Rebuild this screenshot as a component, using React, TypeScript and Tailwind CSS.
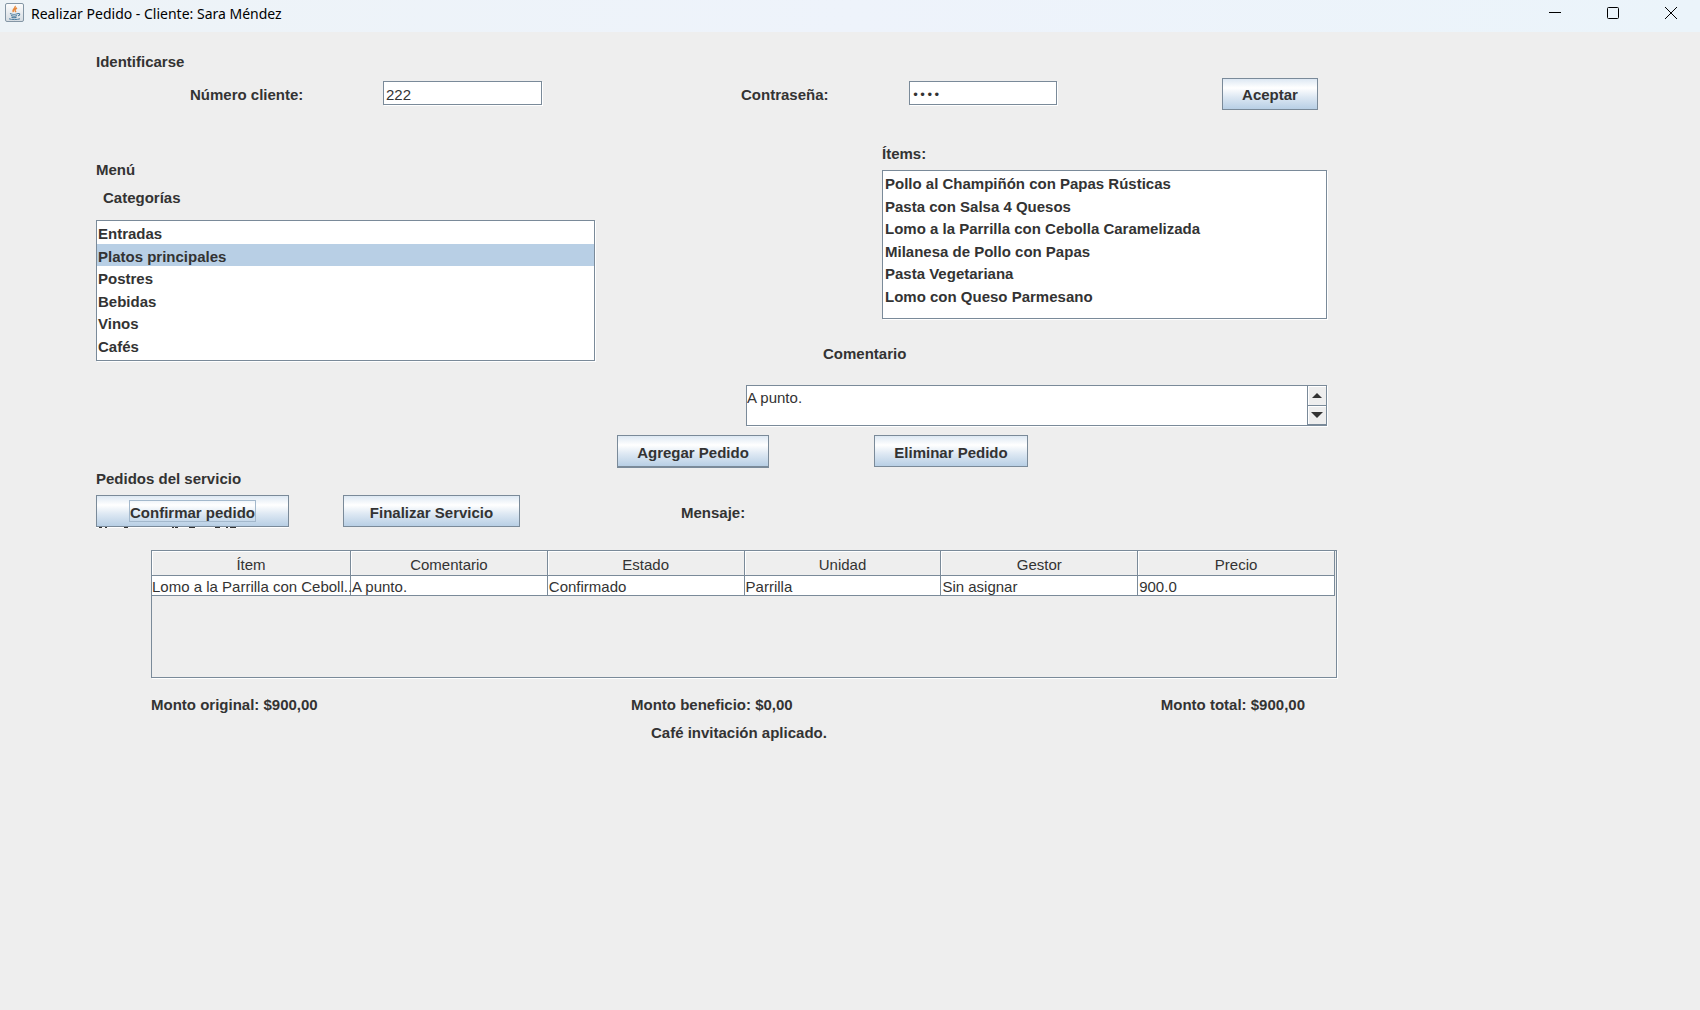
import { FunctionComponent, ReactNode, useState } from "react";

const categories = [
  "Entradas",
  "Platos principales",
  "Postres",
  "Bebidas",
  "Vinos",
  "Cafés",
];

const items = [
  "Pollo al Champiñón con Papas Rústicas",
  "Pasta con Salsa 4 Quesos",
  "Lomo a la Parrilla con Cebolla Caramelizada",
  "Milanesa de Pollo con Papas",
  "Pasta Vegetariana",
  "Lomo con Queso Parmesano",
];

const columns = ["Ítem", "Comentario", "Estado", "Unidad", "Gestor", "Precio"];

const orders = [
  [
    "Lomo a la Parrilla con Ceboll..",
    "A punto.",
    "Confirmado",
    "Parrilla",
    "Sin asignar",
    "900.0",
  ],
];

const JavaIcon: FunctionComponent = () => (
  <svg width="20" height="20" viewBox="0 0 20 20" fill="none" aria-hidden="true">
    <defs>
      <linearGradient id="java-bg" x1="0" y1="0" x2="0" y2="1">
        <stop offset="0" stopColor="#fdfdfd" />
        <stop offset="1" stopColor="#d5dce2" />
      </linearGradient>
    </defs>
    <rect x="0.5" y="0.5" width="18" height="18" rx="1.5" fill="url(#java-bg)" stroke="#8496a5" />
    <path d="M10 3c1.500 2-3.500 3-1.500 6M12 5c-2.500 1.200-2.500 2.200-1 4" stroke="#e8893c" strokeWidth="1.500" />
    <path d="M5 10.500c2 1 6 1 8 0M6 12.500c2 .8 4.500.8 6 0M6.500 14.300c1.500.6 3.500.6 5 0M13 10.500c2.500-.5 2 2 0 2.300" stroke="#4d7d9e" strokeWidth="1.100" />
    <path d="M4 15.800c3 1 8 1 11 0" stroke="#4d7d9e" />
  </svg>
);

const TitleBar: FunctionComponent = () => (
  <header className="flex h-8 items-start justify-between bg-linear-to-r from-[#edf3f7] via-[#eef3fb] to-[#ebf4fa] pl-[5px] text-black">
    <div className="flex items-start gap-1.5 pt-[3px]">
      <JavaIcon />
      <h1 className="pt-px font-['Noto_Sans',sans-serif] text-[14px] leading-5">
        Realizar Pedido - Cliente: Sara Méndez
      </h1>
    </div>
    <div className="flex">
      <button aria-label="Minimizar" className="flex h-[26px] w-[58px] items-center justify-center">
        <svg width="12" height="12" viewBox="0 0 12 12" stroke="currentColor">
          <path d="M0 5.500h12" />
        </svg>
      </button>
      <button aria-label="Maximizar" className="flex h-[26px] w-[58px] items-center justify-center">
        <svg width="12" height="12" viewBox="0 0 12 12" fill="none" stroke="currentColor">
          <rect x="0.5" y="0.5" width="11" height="11" rx="1" />
        </svg>
      </button>
      <button aria-label="Cerrar" className="flex h-[26px] w-[58px] items-center justify-center">
        <svg width="12" height="12" viewBox="0 0 12 12" stroke="currentColor">
          <path d="M0 0l12 12M12 0L0 12" />
        </svg>
      </button>
    </div>
  </header>
);

interface SwingButtonProps {
  children: ReactNode;
  className: string;
  focused?: boolean;
}

const SwingButton: FunctionComponent<SwingButtonProps> = ({
  children,
  className,
  focused,
}) => (
  <button
    className={`flex shrink-0 items-center justify-center border-[#7a8a99] bg-[linear-gradient(#dde8f3,#ffffff_30%,#dde8f3_60%,#b8cfe5)] font-bold ${className}`}
  >
    {focused ? (
      <span className="-mt-1 h-[22px] border border-[#a3b8cc] leading-6">
        {children}
      </span>
    ) : (
      children
    )}
  </button>
);

interface ListProps {
  label: string;
  options: string[];
  selected: string;
  onSelect: (value: string) => void;
  className: string;
}

const List: FunctionComponent<ListProps> = ({
  label,
  options,
  selected,
  onSelect,
  className,
}) => (
  <div
    role="listbox"
    aria-label={label}
    className={`border border-[#7a8a99] bg-white font-bold shadow-[1px_1px_0_white] ${className}`}
  >
    <div className="grid h-[135px] grid-rows-6">
      {options.map((option) => (
        <button
          key={option}
          role="option"
          aria-selected={option === selected}
          onClick={() => onSelect(option)}
          className={`flex items-center px-px pt-1 text-left leading-[18px] ${
            option === selected ? "bg-[#b8cfe5]" : ""
          }`}
        >
          {option}
        </button>
      ))}
    </div>
  </div>
);

const OrdersTable: FunctionComponent = () => (
  <div className="h-[128px] border border-[#7a8a99] pr-px shadow-[1px_1px_0_white]">
    <table className="w-full table-fixed border-separate border-spacing-0">
      <thead>
        <tr>
          {columns.map((column) => (
            <th
              key={column}
              className="h-[25px] border-r border-b border-[#7a8a99] pt-1 font-normal leading-5 shadow-[inset_1px_1px_0_white] first:w-[199px]"
            >
              {column}
            </th>
          ))}
        </tr>
      </thead>
      <tbody>
        {orders.map((order) => (
          <tr key={order[0]}>
            {order.map((cell, index) => (
              <td
                key={columns[index]}
                className="h-5 border-r border-b border-[#7a8a99] bg-white pt-0.5 pl-px leading-[17px] whitespace-nowrap first:pl-0"
              >
                {cell}
              </td>
            ))}
          </tr>
        ))}
      </tbody>
    </table>
  </div>
);

const App: FunctionComponent = () => {
  const [client, setClient] = useState("222");
  const [password, setPassword] = useState("1234");
  const [comment, setComment] = useState("A punto.");
  const [category, setCategory] = useState("Platos principales");
  const [item, setItem] = useState("");

  return (
    <div className="min-h-screen bg-[#eeeeee] font-['Liberation_Sans',Arial,sans-serif] text-[15px] leading-5 text-[#333333]">
      <TitleBar />
      <main className="mr-[363px] ml-24 pt-5">
        <h2 className="font-bold">Identificarse</h2>
        <form
          className="mt-1.5 flex items-center pr-[19px] pl-[94px]"
          onSubmit={(e) => e.preventDefault()}
        >
          <label htmlFor="client" className="w-[193px] pt-0.5 font-bold">
            Número cliente:
          </label>
          <input
            id="client"
            value={client}
            onChange={(e) => setClient(e.target.value)}
            className="mb-0.5 h-6 w-[159px] border border-[#7a8a99] bg-white px-0.5 pt-0.5 shadow-[1px_1px_0_white]"
          />
          <label htmlFor="password" className="ml-auto w-[168px] pt-0.5 font-bold">
            Contraseña:
          </label>
          <input
            id="password"
            type="password"
            value={password}
            onChange={(e) => setPassword(e.target.value)}
            className="mb-0.5 h-6 w-[148px] border border-[#7a8a99] bg-white px-0.5 pt-1 font-['DejaVu_Sans',sans-serif] text-[12px] shadow-[1px_1px_0_white]"
          />
          <SwingButton className="ml-[165px] h-8 w-24 border pt-0.5">Aceptar</SwingButton>
        </form>

        <div className="mt-[34px] flex justify-between pr-2.5">
          <section className="w-[499px] pt-4">
            <h2 className="font-bold">Menú</h2>
            <h3 className="mt-2 pl-[7px] font-bold">Categorías</h3>
            <List
              label="Categorías"
              options={categories}
              selected={category}
              onSelect={setCategory}
              className="mt-3 h-[141px]"
            />
          </section>
          <section className="flex w-[581px] flex-col">
            <h3 className="pl-[136px] font-bold">Ítems:</h3>
            <List
              label="Ítems"
              options={items}
              selected={item}
              onSelect={setItem}
              className="mt-1.5 h-[149px] w-[445px] self-end pl-px"
            />
            <label htmlFor="comment" className="mt-[25px] pl-[77px] font-bold">
              Comentario
            </label>
            <div className="mt-[21px] flex h-[41px] border border-[#7a8a99] shadow-[1px_1px_0_white]">
              <textarea
                id="comment"
                value={comment}
                onChange={(e) => setComment(e.target.value)}
                className="grow resize-none overflow-hidden bg-white pt-0.5"
              />
              <div className="flex w-[19px] flex-col border-l border-[#7a8a99]">
                <button
                  aria-label="Subir"
                  className="flex h-5 items-center justify-center border-b border-[#7a8a99] shadow-[inset_1px_1px_0_white]"
                >
                  <svg width="10" height="5" viewBox="0 0 10 5" fill="#333333">
                    <path d="M0 5L5 0l5 5z" />
                  </svg>
                </button>
                <button
                  aria-label="Bajar"
                  className="flex grow items-center justify-center border-b border-[#7a8a99] shadow-[inset_1px_1px_0_white]"
                >
                  <svg width="12" height="6" viewBox="0 0 12 6" fill="#333333">
                    <path d="M0 0h12L6 6z" />
                  </svg>
                </button>
              </div>
            </div>
          </section>
        </div>

        <div className="mt-[9px] flex items-start pl-[521px]">
          <SwingButton className="h-[33px] w-[152px] border border-b-2 pt-1">
            Agregar Pedido
          </SwingButton>
          <SwingButton className="ml-[105px] h-8 w-[154px] border pt-1">
            Eliminar Pedido
          </SwingButton>
        </div>

        <section>
          <h2 className="mt-px font-bold">Pedidos del servicio</h2>
          <div className="mt-1.5 flex items-center">
            <div className="relative">
              <SwingButton className="h-8 w-[193px] border pt-1" focused>
                Confirmar pedido
              </SwingButton>
              {/* lower edge of the caption that the button covers */}
              <svg
                className="absolute top-full left-0"
                width="193"
                height="1"
                viewBox="0 0 193 1"
                aria-hidden="true"
              >
                <path d="M0 .5h193" stroke="#ffffff" />
                <path
                  d="M3 .5h3m3 0h2m17 0h4m44 0h2m1 0h3m11 0h6m20 0h5m6 0h2m2 0h6"
                  stroke="#333333"
                />
              </svg>
            </div>
            <SwingButton className="ml-[54px] h-8 w-[177px] border pt-1">
              Finalizar Servicio
            </SwingButton>
            <p className="ml-[161px] pt-1 font-bold">Mensaje:</p>
          </div>
          <div className="mt-[23px] pl-[55px]">
            <OrdersTable />
            <div className="mt-[17px] flex pr-8 font-bold">
              <p className="w-[480px]">Monto original: $900,00</p>
              <p>Monto beneficio: $0,00</p>
              <p className="ml-auto">Monto total: $900,00</p>
            </div>
            <p className="mt-2 pl-[500px] font-bold">Café invitación aplicado.</p>
          </div>
        </section>
      </main>
    </div>
  );
};

export default App;
